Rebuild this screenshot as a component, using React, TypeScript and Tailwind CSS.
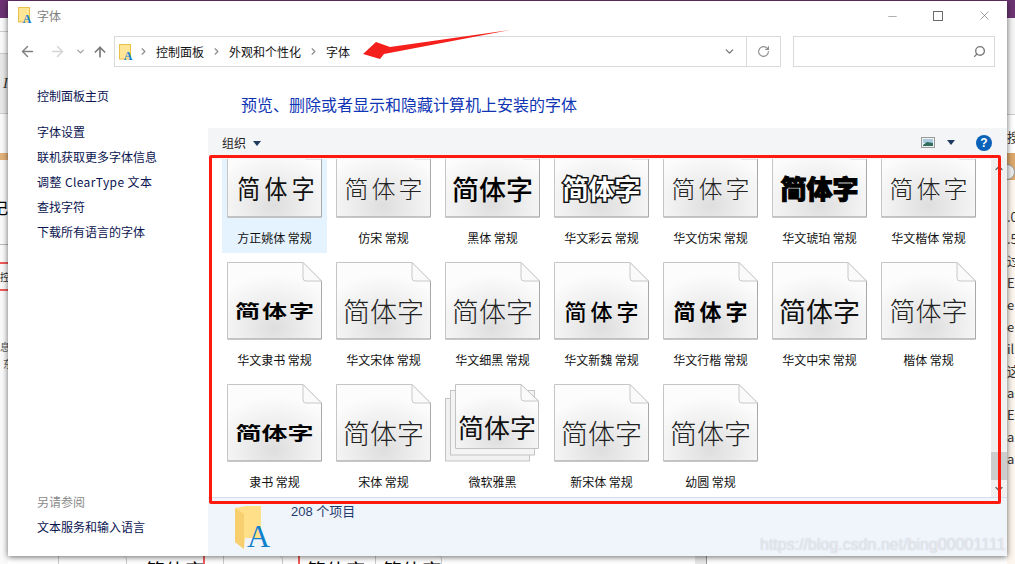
import React from "react";
import {
  ArrowLeft,
  ArrowRight,
  ArrowUp,
  ChevronDown,
  ChevronRight,
  ChevronUp,
  Minus,
  RotateCw,
  Search,
  X,
} from "lucide-react";

const cjk = "font-['Noto_Sans_CJK_SC','Liberation_Sans',sans-serif]";

type Tile = {
  label: string;
  glyph: string;
  selected?: boolean;
  stacked?: boolean;
};

const thin = "text-[24px] text-[#222] font-light tracking-[3px] pl-[3px]";
const plain = "text-[27px] text-[#222] font-light";

const tiles: Tile[] = [
  { label: "方正姚体 常规", glyph: "text-[26px] text-[#111] tracking-[5px] pl-[5px] scale-x-[0.88]", selected: true },
  { label: "仿宋 常规", glyph: thin },
  { label: "黑体 常规", glyph: "text-[27px] text-black font-medium" },
  {
    label: "华文彩云 常规",
    glyph: "text-[26px] font-bold text-white [-webkit-text-stroke:3px_#111] [paint-order:stroke_fill]",
  },
  { label: "华文仿宋 常规", glyph: thin },
  { label: "华文琥珀 常规", glyph: "text-[26px] font-black text-black [-webkit-text-stroke:1px_#000]" },
  { label: "华文楷体 常规", glyph: thin },
  { label: "华文隶书 常规", glyph: "text-[25px] font-bold text-black tracking-[2px] pl-[2px] scale-y-[0.72]" },
  { label: "华文宋体 常规", glyph: plain },
  { label: "华文细黑 常规", glyph: plain },
  { label: "华文新魏 常规", glyph: "text-[22px] font-medium text-black tracking-[4px] pl-[4px]" },
  { label: "华文行楷 常规", glyph: "text-[22px] font-bold text-black tracking-[4px] pl-[4px]" },
  { label: "华文中宋 常规", glyph: "text-[27px] text-[#111]" },
  { label: "楷体 常规", glyph: "text-[26px] text-[#222] font-light" },
  { label: "隶书 常规", glyph: "text-[26px] font-bold text-black scale-y-[0.72]" },
  { label: "宋体 常规", glyph: plain },
  { label: "微软雅黑", glyph: "text-[26px] text-[#111] pl-[9px] pb-[10px]", stacked: true },
  { label: "新宋体 常规", glyph: plain },
  { label: "幼圆 常规", glyph: plain },
];

const links = ["字体设置", "联机获取更多字体信息", "调整 ClearType 文本", "查找字符", "下载所有语言的字体"];

function FontFileIcon({ className }: { className: string }) {
  return (
    <svg viewBox="0 0 14 16" className={className}>
      <rect x="0.5" y="0.5" width="11" height="14.5" fill="#ffe596" stroke="#e9bf4e" />
      <text x="9" y="15.5" textAnchor="middle" fontSize="12" fontWeight="700" fontFamily="Liberation Serif" fill="#1483cf">
        A
      </text>
    </svg>
  );
}

function FolderIcon() {
  return (
    <svg viewBox="0 0 38 44" className="w-[38px] h-[44px]">
      <path d="M0 2 L11 0 H26 V32 H10 L9 43 L0 36 Z" fill="#ffdf88" />
      <path d="M0 2 L9 8 V43 L0 36 Z" fill="#f7cf6f" />
      <text x="12" y="41" fontSize="32" fontFamily="Liberation Serif" fill="#0f80cc">
        A
      </text>
    </svg>
  );
}

function PageArt({ stacked }: { stacked?: boolean }) {
  if (stacked) {
    return (
      <svg viewBox="0 0 95 78" className="[grid-area:1/1] w-[95px] h-[78px]">
        <rect x="0.5" y="14.5" width="84" height="62.5" fill="#f1f1f1" stroke="#c4c4c4" />
        <rect x="5.5" y="6.5" width="84" height="64.5" fill="#f4f4f4" stroke="#c4c4c4" />
        <path d="M10.5 0.5 H76 L93.5 17 V64.5 H10.5 Z" fill="url(#pageFill)" stroke="#c2c2c2" />
        <path d="M76 0.5 V14 Q76 17 79 17 H93.5 Z" fill="#fafafa" stroke="#c8c8c8" />
      </svg>
    );
  }
  return (
    <svg viewBox="0 0 95 78" className="[grid-area:1/1] w-[95px] h-[78px]">
      <path d="M0.5 0.5 H76 L94.5 19 V77 H0.5 Z" fill="url(#pageFill)" stroke="#c6c6c6" />
      <path d="M0.5 77 H94.5 V19" fill="none" stroke="#a9a9a9" />
      <path d="M76 0.5 V16 Q76 19 79 19 H94.5 Z" fill="#fafafa" stroke="#c8c8c8" />
    </svg>
  );
}

function FontTile({ tile }: { tile: Tile }) {
  return (
    <div className={`w-[105px] h-[114px] pt-px flex flex-col items-center ${tile.selected ? "bg-[#e5f3ff]" : ""}`}>
      <div className="grid w-[95px] h-[78px]">
        <PageArt stacked={tile.stacked} />
        <div className="[grid-area:1/1] flex items-center justify-center pt-[18px]">
          <span className={`leading-none whitespace-nowrap ${tile.glyph}`}>简体字</span>
        </div>
      </div>
      <span className="mt-[12px] text-[12px] leading-[16px] text-[#111] whitespace-nowrap">{tile.label}</span>
    </div>
  );
}

function BackTab({ className, text }: { className: string; text?: boolean }) {
  return (
    <div className={`h-[8px] overflow-hidden text-[20px] leading-[20px] text-black ${className}`}>
      {text && <div className="pt-[5px] pl-[6px] whitespace-nowrap">简体字</div>}
    </div>
  );
}

function Backdrop() {
  return (
    <div className="absolute inset-0 bg-white">
      <div className="h-px bg-[#6c3472]" />
      <div className="absolute left-0 top-0 w-[8px] h-[564px] flex flex-col bg-[#fafafa] overflow-hidden">
        <div className="h-[18px] bg-[#6c3472] shrink-0" />
        <div className="h-[13px] shrink-0" />
        <div className="h-[22px] shrink-0 border-t border-[#ccc]" />
        <div className="h-[61px] shrink-0 bg-[#e8e8e8] border-t border-b border-[#ccc] flex items-center justify-end">
          <span className="font-['Liberation_Serif',serif] italic text-[15px] text-[#333]">I</span>
        </div>
        <div className="h-[39px] shrink-0" />
        <div className="h-[7px] shrink-0 bg-[#e3b27b]" />
        <div className="h-[85px] shrink-0 border-b border-[#bbb] flex justify-end pt-[37px]">
          <span className="text-[16px] leading-[20px] text-black">记</span>
        </div>
        <div className="h-[17px] shrink-0" />
        <div className="h-[29px] shrink-0 border-y-2 border-[#f25a5a] flex items-center justify-end">
          <span className="text-[10px] text-[#333] -mr-[2px]">控</span>
        </div>
        <div className="pt-[47px] flex flex-col items-end text-[10px] leading-[17px] text-[#555]">
          <span className="-mr-[2px]">息</span>
          <span className="-mr-[5px]">东</span>
        </div>
      </div>
      <div className="absolute right-0 top-0 w-[8px] h-[564px] flex flex-col bg-[#fdf6ee] text-[13px] leading-[22px] text-[#333] overflow-hidden">
        <div className="h-[18px] bg-[#6c3472] shrink-0" />
        <div className="h-[97px] shrink-0 bg-[#f4f4f4] border-b border-[#ccc]" />
        <div className="h-[38px] shrink-0 bg-white pt-[11px]">搜</div>
        <div className="h-[27px] shrink-0 bg-[#dca86c] pt-[11px]">
          <div className="w-[16px] h-[16px] -ml-[8px] rounded-full bg-[#eee] border border-[#999]" />
        </div>
        <div className="pt-[26px] whitespace-nowrap">
          <div>.0</div>
          <div>.5</div>
          <div>过</div>
          <div>El</div>
          <div>e</div>
          <div>er</div>
          <div>ill</div>
          <div>这</div>
          <div>al</div>
          <div>ES</div>
          <div>al</div>
          <div>a</div>
        </div>
      </div>
      <div className="absolute left-[58px] top-[556px] flex">
        <BackTab className="w-[69px] border-x border-[#ccc] rounded-tr-sm" />
        <BackTab className="w-[66px] ml-[12px] border-r-2 border-[#f25a5a]" text />
        <BackTab className="w-[60px] ml-[18px] border-x border-[#ccc] rounded-tr-sm" />
        <BackTab className="w-[66px] ml-[15px] border-l-2 border-[#f25a5a]" text />
        <BackTab className="w-[67px] ml-[11px] border-x border-[#ccc] rounded-tr-sm" text />
        <BackTab className="w-[12px] ml-[253px] bg-[#e8e8e8] border-r border-[#999]" />
      </div>
    </div>
  );
}

export default function App() {
  return (
    <div className={`relative w-[1015px] h-[564px] overflow-hidden ${cjk}`}>
      <svg width="0" height="0" className="absolute">
        <defs>
          <radialGradient id="pageFill" cx="0.5" cy="0.85" r="0.7">
            <stop offset="0" stopColor="#dedede" />
            <stop offset="0.6" stopColor="#f1f1f1" />
            <stop offset="1" stopColor="#fcfcfc" />
          </radialGradient>
        </defs>
      </svg>

      <Backdrop />

      {/* explorer window */}
      <div className="absolute left-[8px] top-px w-[999px] h-[555px] flex flex-col bg-white shadow-[0_1px_6px_rgba(0,0,0,0.6)]">
        <div className="h-[35px] flex items-start shrink-0">
          <FontFileIcon className="w-[14px] h-[16px] ml-[10px] mt-[6px]" />
          <span className="ml-[5px] mt-[6px] text-[12px] leading-[18px] text-[#808080]">字体</span>
          <div className="ml-auto flex text-[#6a6a6a]">
            <div className="w-[46px] h-[29px] flex items-center justify-center pt-[2px]">
              <Minus size={13} strokeWidth={1} />
            </div>
            <div className="w-[46px] h-[29px] flex items-center justify-center">
              <div className="w-[10px] h-[10px] border border-[#6a6a6a]" />
            </div>
            <div className="w-[46px] h-[29px] flex items-center justify-center">
              <X size={15} strokeWidth={1} />
            </div>
          </div>
        </div>

        <div className="h-[31px] flex items-center shrink-0">
          <ArrowLeft size={17} strokeWidth={2} className="ml-[11px] text-[#7f7f7f]" />
          <ArrowRight size={17} strokeWidth={2} className="ml-[13px] text-[#d4d4d4]" />
          <ChevronDown size={11} strokeWidth={2.5} className="ml-[9px] text-[#9a9a9a]" />
          <ArrowUp size={16} strokeWidth={2.5} className="ml-[6px] text-[#7a7a7a]" />
          <div className="ml-[6px] w-[667px] h-[31px] flex items-center border border-[#d9d9d9]">
            <FontFileIcon className="w-[14px] h-[16px] ml-[4px]" />
            <ChevronRight size={11} strokeWidth={2.5} className="ml-[5px] text-[#8a8a8a]" />
            <span className="ml-[7px] text-[12px] text-[#111]">控制面板</span>
            <ChevronRight size={11} strokeWidth={2.5} className="ml-[7px] text-[#8a8a8a]" />
            <span className="ml-[7px] text-[12px] text-[#111]">外观和个性化</span>
            <ChevronRight size={11} strokeWidth={2.5} className="ml-[7px] text-[#8a8a8a]" />
            <span className="ml-[7px] text-[12px] text-[#111]">字体</span>
            <ChevronDown size={13} strokeWidth={2.5} className="ml-auto mr-[10px] text-[#777]" />
            <div className="w-[34px] h-full flex items-center justify-center border-l border-[#d9d9d9]">
              <RotateCw size={13} strokeWidth={2} className="text-[#888]" />
            </div>
          </div>
          <div className="ml-[12px] w-[202px] h-[31px] flex items-center justify-end pr-[8px] border border-[#d9d9d9]">
            <Search size={13} strokeWidth={2.5} className="text-[#777] -scale-x-100" />
          </div>
        </div>

        <div className="flex-1 flex min-h-0">
          <aside className="w-[200px] shrink-0 pl-[29px] pt-[16px] pb-[17px] flex flex-col text-[12px] leading-[25px] text-[#0a1450]">
            <div className="mb-[11px]">控制面板主页</div>
            {links.map((l, i) => (
              <div key={l} className={i === 2 ? "tracking-[0.4px]" : ""}>
                {l}
              </div>
            ))}
            <div className="mt-auto text-[#8a8a8a]">另请参阅</div>
            <div>文本服务和输入语言</div>
          </aside>

          <main className="flex-1 flex flex-col min-w-0">
            <div className="h-[61px] shrink-0 pl-[33px] pt-[25px] text-[16px] leading-[24px] text-[#0f35b5]">
              预览、删除或者显示和隐藏计算机上安装的字体
            </div>

            <div className="h-[31px] shrink-0 flex items-center bg-[#f4f5f7] pl-[14px] pr-[15px] pb-[2px]">
              <span className="text-[12px] text-[#222]">组织</span>
              <span className="ml-[7px] mt-[1px] border-x-[4px] border-t-[5px] border-x-transparent border-t-[#1f3a5f]" />
              <svg viewBox="0 0 14 11" className="ml-auto w-[14px] h-[11px]">
                <rect x="0.5" y="0.5" width="13" height="10" fill="#f2f2f2" stroke="#9a9a9a" />
                <rect x="2" y="2" width="10" height="4" fill="#a9cbe0" />
                <path d="M2 8 L6 5 L12 6 V9 H2 Z" fill="#2f6b5e" />
              </svg>
              <span className="ml-[12px] mr-[21px] border-x-[4px] border-t-[5px] border-x-transparent border-t-[#1f3a5f]" />
              <div className="w-[16px] h-[16px] rounded-full bg-[#0a62b8] text-white text-[12px] leading-[16px] font-bold text-center font-['Liberation_Sans',sans-serif]">
                ?
              </div>
            </div>

            <div className="h-[339px] shrink-0 flex border-b border-[#d6dcea]">
              <div className="flex-1 min-w-0 overflow-hidden pl-[14px]">
                <div className="-mt-[20px] grid grid-cols-[repeat(7,105px)] gap-x-[4px] gap-y-[8px]">
                  {tiles.map((t) => (
                    <FontTile key={t.label} tile={t} />
                  ))}
                </div>
              </div>
              <div className="w-[16px] shrink-0 flex flex-col bg-[#f0f0f0] text-[#606060]">
                <div className="h-[17px] flex items-center justify-center">
                  <ChevronUp size={12} strokeWidth={2.5} />
                </div>
                <div className="flex-1" />
                <div className="h-[28px] bg-[#cdcdcd]" />
                <div className="h-[17px] flex items-center justify-center">
                  <ChevronDown size={12} strokeWidth={2.5} />
                </div>
              </div>
            </div>

            <div className="flex-1 flex items-start bg-[#f0f4fb] pl-[27px] pt-[8px]">
              <FolderIcon />
              <span className="ml-[18px] -mt-[3px] text-[13px] leading-[18px] text-[#1f3a6d] font-['Liberation_Sans','Noto_Sans_CJK_SC',sans-serif]">
                208 个项目
              </span>
            </div>
          </main>
        </div>
      </div>

      {/* annotations drawn on top of the screenshot */}
      <div className="absolute left-[209px] top-[155px] w-[792px] h-[349px] border-[3px] border-[#ff1a10] rounded-[2px]" />
      <svg className="absolute inset-0 w-[1015px] h-[564px] pointer-events-none" viewBox="0 0 1015 564">
        <polygon points="363,54 376,42 390,47 510,30 384,54 380,59" fill="#f5201c" />
      </svg>
      <span className="absolute left-[760px] top-[535px] text-[16px] leading-[20px] text-white/60 [text-shadow:0_0_1px_rgba(120,130,150,0.5)] font-['Liberation_Sans',sans-serif] whitespace-nowrap">
        https://blog.csdn.net/bing00001111
      </span>
    </div>
  );
}
